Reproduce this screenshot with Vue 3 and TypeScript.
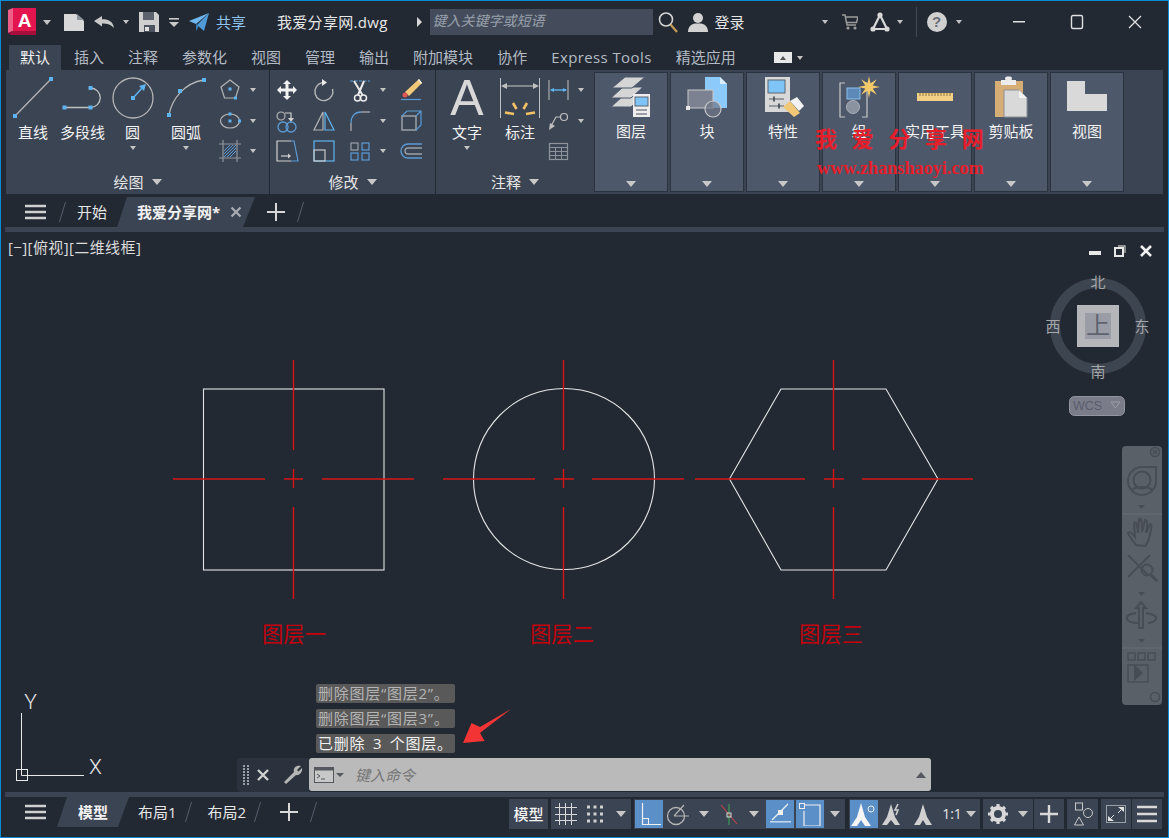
<script setup lang="ts">
const ribbonTabs = ['默认', '插入', '注释', '参数化', '视图', '管理', '输出', '附加模块', '协作', 'Express Tools', '精选应用']

function starPoints(cx: number, cy: number, outer: number, inner: number, n: number) {
  const pts: string[] = []
  for (let i = 0; i < n * 2; i++) {
    const r = i % 2 ? inner : outer
    const a = (Math.PI * i) / n - Math.PI / 2
    pts.push(`${(cx + r * Math.cos(a)).toFixed(1)},${(cy + r * Math.sin(a)).toFixed(1)}`)
  }
  return pts.join(' ')
}

// the three sample shapes share the same centre-mark drawing
const marks = [
  { cx: 293, h: [173, 265, 284, 303, 322, 414] },
  { cx: 563, h: [443, 535, 554, 574, 592, 684] },
  { cx: 833, h: [695, 805, 824, 844, 862, 973] },
]
const layerLabels = [
  { x: 294, text: '图层一' },
  { x: 562, text: '图层二' },
  { x: 831, text: '图层三' },
]
</script>

<template>
  <div class="window">
    <header class="titlebar">
      <svg class="t-logo" width="30" height="28" viewBox="0 0 30 28">
        <polygon points="0,2 5,0 5,23 0,25" fill="#ee5f87" />
        <polygon points="0,25 5,23 28,23 28,27 3,27" fill="#a40f3c" />
        <rect x="5" y="0" width="23" height="23" fill="#e3154f" />
        <text x="16.5" y="19" text-anchor="middle" class="logo-a">A</text>
      </svg>
      <i class="caret t-c1"></i>
      <svg class="t-new" width="20" height="17" viewBox="0 0 20 17">
        <polygon points="0,0 12,0 20,7 20,17 0,17" fill="#d8d8d8" />
        <polygon points="13,0 20,6 13,6" fill="#8f949c" />
      </svg>
      <svg class="t-undo" width="20" height="12" viewBox="0 0 20 12">
        <path d="M0 5L8 0V3.2C14 3 19 5 20 12C17 8.6 13 7.4 8 7.6V10.5Z" fill="#c9c9c9" />
      </svg>
      <i class="caret t-c2"></i>
      <svg class="t-save" width="20" height="20" viewBox="0 0 20 20">
        <path d="M0 0H17L20 3V20H0Z" fill="#cfcfcf" />
        <rect x="4" y="0" width="11" height="8" fill="#5d6470" />
        <rect x="5" y="13" width="11" height="7" fill="#4c535f" />
        <rect x="6" y="15" width="4" height="4" fill="#e0e0e0" />
      </svg>
      <svg class="t-more" width="10" height="9" viewBox="0 0 10 9">
        <rect width="10" height="1.6" fill="#c9c9c9" />
        <polygon points="0,4 10,4 5,9" fill="#c9c9c9" />
      </svg>
      <svg class="t-plane" width="20" height="18" viewBox="0 0 20 18">
        <polygon points="0,8 20,0 7,11" fill="#6fb9f0" />
        <polygon points="20,0 15,18 8,12" fill="#4e9bd8" />
        <polygon points="7,11 10,13 7,18" fill="#3b7fb8" />
      </svg>
      <span class="t-share">共享</span>
      <span class="t-file">我爱分享网.dwg</span>
      <svg class="t-next" width="5" height="10" viewBox="0 0 5 10"><polygon points="0,0 5,5 0,10" fill="#d8d8d8" /></svg>
      <div class="t-search">键入关键字或短语</div>
      <svg class="t-glass" width="20" height="22" viewBox="0 0 20 22">
        <circle cx="8" cy="8.5" r="6.5" fill="none" stroke="#d5d5d5" stroke-width="1.6" />
        <line x1="12.5" y1="13.5" x2="19" y2="21" stroke="#c59a55" stroke-width="2.2" />
      </svg>
      <svg class="t-user" width="20" height="20" viewBox="0 0 20 20">
        <circle cx="10" cy="6" r="5" fill="#d2d2d2" />
        <path d="M0 20C0 14 4 12 7 11.5H13C16 12 20 14 20 20Z" fill="#d2d2d2" />
      </svg>
      <span class="t-login">登录</span>
      <i class="caret t-c3"></i>
      <svg class="t-cart" width="16" height="16" viewBox="0 0 16 16">
        <path d="M0 1H3L5 11H14M4 3H16L14.5 8.5H5" fill="none" stroke="#9b9b9b" stroke-width="1.5" />
        <circle cx="6" cy="14" r="1.6" fill="#9b9b9b" />
        <circle cx="13" cy="14" r="1.6" fill="#9b9b9b" />
      </svg>
      <svg class="t-a360" width="20" height="20" viewBox="0 0 20 20">
        <path d="M10 3L3 17H17Z" fill="none" stroke="#d8d8d8" stroke-width="2.2" />
        <circle cx="10" cy="3" r="2.6" fill="#d8d8d8" />
        <circle cx="3" cy="17" r="2.6" fill="#d8d8d8" />
        <circle cx="17" cy="17" r="2.6" fill="#d8d8d8" />
      </svg>
      <i class="caret t-c4"></i>
      <i class="t-sep"></i>
      <div class="t-help">?</div>
      <i class="caret t-c5"></i>
      <div class="t-winbtns">
        <svg width="58" height="16" viewBox="0 0 58 16"><rect x="23" y="7" width="12" height="1.5" fill="#e0e0e0" /></svg>
        <svg width="58" height="16" viewBox="0 0 58 16"><rect x="23.5" y="1.5" width="11" height="13" rx="1.5" fill="none" stroke="#e0e0e0" stroke-width="1.4" /></svg>
        <svg width="58" height="16" viewBox="0 0 58 16"><path d="M23 2L35 14M35 2L23 14" stroke="#e0e0e0" stroke-width="1.3" /></svg>
      </div>
    </header>

    <nav class="ribbon-tabs">
      <span v-for="(tab, i) in ribbonTabs" :key="tab" class="r-tab" :class="{ active: i === 0, latin: tab === 'Express Tools' }">{{ tab }}</span>
      <span class="r-mini"><i></i></span>
      <i class="caret r-mini-c"></i>
    </nav>

    <section class="ribbon">
      <!-- 绘图 -->
      <div class="group g-draw">
        <div class="tools">
          <div class="big" style="width: 54px">
            <svg width="54" height="46" viewBox="0 0 54 46">
              <line x1="9" y1="41" x2="45" y2="4" stroke="#b5b5b5" stroke-width="1.3" />
              <rect x="7" y="39" width="4" height="4" class="grip" />
              <rect x="43" y="2" width="4" height="4" class="grip" />
            </svg>
            <span class="big-label">直线</span>
          </div>
          <div class="big" style="width: 45px">
            <svg width="45" height="46" viewBox="0 0 45 46">
              <path d="M4.5 32.5H30.5A9.75 9.75 0 0 0 30.5 13" fill="none" stroke="#c0c0c0" stroke-width="1.3" />
              <rect x="2.5" y="30.5" width="4" height="4" class="grip" />
              <rect x="28.5" y="30.5" width="4" height="4" class="grip" />
              <rect x="28.5" y="11" width="4" height="4" class="grip" />
            </svg>
            <span class="big-label">多段线</span>
          </div>
          <div class="big" style="width: 55px">
            <svg width="54" height="46" viewBox="0 0 54 46">
              <circle cx="27" cy="23" r="20" fill="none" stroke="#b5b5b5" stroke-width="1.3" />
              <line x1="27" y1="23" x2="37" y2="12" stroke="#5eb4f0" stroke-width="1.5" />
              <polygon points="40,9 38,16 33,11" fill="#5eb4f0" />
              <rect x="25" y="21" width="4" height="4" class="grip" />
            </svg>
            <span class="big-label">圆</span>
            <i class="caret big-c"></i>
          </div>
          <div class="big" style="width: 52px">
            <svg width="52" height="46" viewBox="0 0 52 46">
              <path d="M9 40C12 24 24 8 44 5" fill="none" stroke="#b5b5b5" stroke-width="1.3" />
              <rect x="7" y="38" width="4" height="4" class="grip" />
              <rect x="18" y="14" width="4" height="4" class="grip" />
              <rect x="42" y="3" width="4" height="4" class="grip" />
            </svg>
            <span class="big-label">圆弧</span>
            <i class="caret big-c"></i>
          </div>
          <div class="small-col">
            <div class="small">
              <svg width="30" height="30" viewBox="0 0 30 30">
                <polygon points="15,5 24,12 20.5,23 9.5,23 6,12" fill="none" stroke="#b5b5b5" stroke-width="1.2" />
                <rect x="13.5" y="12.5" width="3" height="3" class="grip" />
                <rect x="19" y="21.5" width="3" height="3" class="grip" />
              </svg>
              <i class="caret"></i>
            </div>
            <div class="small">
              <svg width="30" height="30" viewBox="0 0 30 30">
                <ellipse cx="15" cy="15" rx="9.5" ry="7" fill="none" stroke="#b5b5b5" stroke-width="1.2" />
                <rect x="13.5" y="13.5" width="3" height="3" class="grip" />
                <rect x="13.5" y="6.5" width="3" height="3" class="grip" />
                <rect x="23" y="13.5" width="3" height="3" class="grip" />
              </svg>
              <i class="caret"></i>
            </div>
            <div class="small">
              <svg width="30" height="30" viewBox="0 0 30 30">
                <path d="M8 4V26M22 4V26M4 8H26M4 22H26" stroke="#8f949c" stroke-width="1.2" />
                <path d="M9 15L15 9M9 21L21 9M15 21L21 15M9 18L18 9M12 21L21 12" stroke="#5b9bd5" stroke-width="1" />
              </svg>
              <i class="caret"></i>
            </div>
          </div>
        </div>
        <div class="group-label">绘图<i class="caret wide"></i></div>
      </div>

      <!-- 修改 -->
      <div class="group g-edit">
        <div class="tools edit-grid">
          <svg width="30" height="30" viewBox="0 0 30 30">
            <path d="M15 5l4 4h-2.5v4.5H21V11l4 4-4 4v-2.5h-4.5V21H19l-4 4-4-4h2.5v-4.5H9V19l-4-4 4-4v2.5h4.5V9H11z" fill="#f2f2f2" />
          </svg>
          <svg width="30" height="30" viewBox="0 0 30 30">
            <path d="M13 7.8A9 9 0 1 0 23.5 14" fill="none" stroke="#b5b5b5" stroke-width="1.4" />
            <polygon points="13,4 18,7.5 13,11" fill="#e8e8e8" />
          </svg>
          <div class="small">
            <svg width="30" height="30" viewBox="0 0 30 30">
              <path d="M5 6H25" stroke="#5b9bd5" stroke-width="1.2" stroke-dasharray="3 1.5" />
              <path d="M9 6L17.5 20M19 6L13 20" stroke="#ececec" stroke-width="2" />
              <circle cx="12.5" cy="23" r="3" fill="none" stroke="#ececec" stroke-width="1.5" />
              <circle cx="18.5" cy="23" r="3" fill="none" stroke="#ececec" stroke-width="1.5" />
            </svg>
            <i class="caret"></i>
          </div>
          <svg width="30" height="30" viewBox="0 0 30 30">
            <polygon points="23,4 26,8 13,21 9,17" fill="#f0c878" />
            <polygon points="23,4 26,8 25,9 22,5" fill="#f5f5f5" />
            <circle cx="9" cy="20" r="2.5" fill="#e05555" />
            <line x1="5" y1="24.5" x2="25" y2="24.5" stroke="#5b9bd5" stroke-width="1.2" />
          </svg>

          <svg width="30" height="30" viewBox="0 0 30 30">
            <circle cx="9" cy="10" r="4" fill="none" stroke="#b5b5b5" stroke-width="1.2" />
            <path d="M13 7H19V14" fill="none" stroke="#d0d0d0" stroke-width="1.2" />
            <polygon points="16,12 22,12 19,16" fill="#d0d0d0" />
            <circle cx="11" cy="21" r="5" fill="none" stroke="#5b9bd5" stroke-width="1.3" />
            <circle cx="19" cy="21" r="5" fill="none" stroke="#5b9bd5" stroke-width="1.3" />
          </svg>
          <svg width="30" height="30" viewBox="0 0 30 30">
            <polygon points="14,6 14,24 5,24" fill="none" stroke="#b5b5b5" stroke-width="1.2" />
            <polygon points="16,6 16,24 25,24" fill="none" stroke="#5eb4f0" stroke-width="1.2" />
          </svg>
          <div class="small">
            <svg width="30" height="30" viewBox="0 0 30 30">
              <path d="M6 25V17" stroke="#b5b5b5" stroke-width="1.2" />
              <path d="M16 6H25" stroke="#b5b5b5" stroke-width="1.2" />
              <path d="M6 17C6 10 10 6 16 6" fill="none" stroke="#5b9bd5" stroke-width="1.3" />
            </svg>
            <i class="caret"></i>
          </div>
          <svg width="30" height="30" viewBox="0 0 30 30">
            <rect x="6" y="10" width="14" height="14" fill="none" stroke="#9aa0a8" stroke-width="1.5" />
            <path d="M6 10L11 5H25V19L20 24M20 10L25 5" fill="none" stroke="#5b9bd5" stroke-width="1.2" />
          </svg>

          <svg width="30" height="30" viewBox="0 0 30 30">
            <path d="M19 5H5V25H19" fill="none" stroke="#d0d0d0" stroke-width="1.2" />
            <path d="M19 5H22L26 25H19" fill="none" stroke="#5b9bd5" stroke-width="1.2" />
            <path d="M9 20H17" stroke="#d0d0d0" stroke-width="1.2" />
            <polygon points="16,17.5 19,20 16,22.5" fill="#d0d0d0" />
          </svg>
          <svg width="30" height="30" viewBox="0 0 30 30">
            <rect x="5" y="5" width="20" height="20" fill="none" stroke="#5eb4f0" stroke-width="1.2" />
            <rect x="5" y="14" width="11" height="11" fill="none" stroke="#c8c8c8" stroke-width="1.2" />
          </svg>
          <div class="small">
            <svg width="30" height="30" viewBox="0 0 30 30">
              <rect x="6" y="7" width="7" height="7" fill="none" stroke="#9aa0a8" stroke-width="1.2" />
              <rect x="17" y="7" width="7" height="7" fill="none" stroke="#5b9bd5" stroke-width="1.2" />
              <rect x="6" y="17" width="7" height="7" fill="none" stroke="#5b9bd5" stroke-width="1.2" />
              <rect x="17" y="17" width="7" height="7" fill="none" stroke="#5b9bd5" stroke-width="1.2" />
            </svg>
            <i class="caret"></i>
          </div>
          <svg width="30" height="30" viewBox="0 0 30 30">
            <path d="M26 8H12A7 7 0 0 0 12 22H26" fill="none" stroke="#5b9bd5" stroke-width="1.3" />
            <path d="M26 12H12A3 3 0 0 0 12 18H26" fill="none" stroke="#9aa0a8" stroke-width="1.3" />
          </svg>
        </div>
        <div class="group-label">修改<i class="caret wide"></i></div>
      </div>

      <!-- 注释 -->
      <div class="group g-note">
        <div class="tools">
          <div class="big" style="width: 62px">
            <span class="big-a">A</span>
            <span class="big-label">文字</span>
            <i class="caret big-c"></i>
          </div>
          <div class="big" style="width: 44px">
            <svg width="44" height="46" viewBox="0 0 44 46">
              <path d="M2.5 3V43M41.5 3V43" stroke="#c0c0c0" stroke-width="1" />
              <path d="M8 11H36" stroke="#b5b5b5" stroke-width="1.2" />
              <polygon points="3,11 9,8 9,14" fill="#c0c0c0" />
              <polygon points="41,11 35,8 35,14" fill="#c0c0c0" />
              <path d="M7 37.5L16 39M15 28L18.5 34M29 28L25.5 34M28 39L37 37.5" stroke="#f2c266" stroke-width="2.6" />
            </svg>
            <span class="big-label">标注</span>
          </div>
          <div class="small-col note-col">
            <div class="small">
              <svg width="30" height="30" viewBox="0 0 30 30">
                <path d="M6 5V25M25 5V25" stroke="#c0c0c0" stroke-width="1" />
                <path d="M8 15H23" stroke="#5eb4f0" stroke-width="1.4" />
                <polygon points="7,15 11,13 11,17" fill="#5eb4f0" />
                <polygon points="24,15 20,13 20,17" fill="#5eb4f0" />
              </svg>
              <i class="caret"></i>
            </div>
            <div class="small">
              <svg width="30" height="30" viewBox="0 0 30 30">
                <circle cx="21" cy="11" r="3.5" fill="none" stroke="#c0c0c0" stroke-width="1.2" />
                <path d="M17.5 11H13L8 20" fill="none" stroke="#c0c0c0" stroke-width="1.2" />
                <polygon points="6,24 7,17 12,20" fill="#c0c0c0" />
              </svg>
              <i class="caret"></i>
            </div>
            <div class="small">
              <svg width="30" height="30" viewBox="0 0 30 30">
                <rect x="6.5" y="7.5" width="18" height="16" fill="none" stroke="#8f949c" stroke-width="1.2" />
                <path d="M6.5 11.5H24.5M6.5 15.5H24.5M6.5 19.5H24.5M12.5 11.5V23.5M18.5 11.5V23.5" stroke="#8f949c" stroke-width="1" />
              </svg>
            </div>
          </div>
        </div>
        <div class="group-label">注释<i class="caret wide"></i></div>
      </div>

      <!-- 折叠面板 -->
      <div class="collapsed">
        <div class="panel">
          <svg width="72" height="46" viewBox="0 0 72 46">
            <g transform="translate(-1 0)">
              <polygon points="28,21 48,21 36,32 16,32" fill="#d5d5d5" stroke="#4d586b" />
              <polygon points="28,12 48,12 36,23 16,23" fill="#d5d5d5" stroke="#4d586b" />
              <polygon points="30,2 50,2 37,13 17,13" fill="#d5d5d5" stroke="#4d586b" />
              <rect x="38" y="19" width="17" height="23" fill="#eeeeee" />
              <rect x="40" y="22" width="13" height="9" fill="#7fc4f7" stroke="#5a6470" />
              <path d="M41 35H52M41 39H52" stroke="#4a4f58" stroke-width="1" />
            </g>
          </svg>
          <span class="panel-label">图层</span>
          <i class="caret wide"></i>
        </div>
        <div class="panel">
          <svg width="72" height="46" viewBox="0 0 72 46">
            <polygon points="33,2 48,2 55,9 55,33 33,33" fill="#8ccafc" />
            <polygon points="48,2 55,9 48,9" fill="#d8ecfb" />
            <rect x="16" y="15" width="25" height="18" fill="#7c8291" stroke="#c8c8c8" />
            <circle cx="41" cy="34" r="8" fill="#6f7686" fill-opacity="0.7" stroke="#c8c8c8" stroke-width="1.2" />
            <rect x="14" y="31" width="4" height="4" fill="#e8e8e8" />
          </svg>
          <span class="panel-label">块</span>
          <i class="caret wide"></i>
        </div>
        <div class="panel">
          <svg width="72" height="46" viewBox="0 0 72 46">
            <rect x="17" y="2" width="25" height="35" fill="#d8d8d8" />
            <rect x="20" y="5" width="17" height="13" fill="#7fc4f7" stroke="#5a6470" />
            <path d="M21 24H36M21 31H36" stroke="#555b65" stroke-width="1.2" />
            <path d="M26 21.5V26.5M31 28.5V33.5" stroke="#555b65" stroke-width="2" />
            <polygon points="35,32 42,26 52,38 46,42" fill="#f0c878" />
            <polygon points="42,26 49,22 56,31 51,36" fill="#f2f2f2" />
          </svg>
          <span class="panel-label">特性</span>
          <i class="caret wide"></i>
        </div>
        <div class="panel">
          <svg width="72" height="46" viewBox="0 0 72 46">
            <path d="M21 8H16V42H21M40 8H43V42H38" fill="none" stroke="#c8c8c8" stroke-width="1.2" />
            <rect x="23" y="13" width="13" height="11" fill="#5d89b8" stroke="#8cc0ee" />
            <circle cx="29" cy="32" r="6.5" fill="#8b93a1" stroke="#aab0ba" />
            <polygon :points="starPoints(45, 12, 11, 4, 8)" fill="#f3c969" />
          </svg>
          <span class="panel-label">组</span>
          <i class="caret wide"></i>
        </div>
        <div class="panel">
          <svg width="72" height="46" viewBox="0 0 72 46">
            <rect x="17" y="18" width="36" height="8" fill="#f2d084" />
            <path d="M20 18v3M23 18v3M26 18v3M29 18v3M32 18v3M35 18v3M38 18v3M41 18v3M44 18v3M47 18v3M50 18v3" stroke="#8a7440" stroke-width="1" />
          </svg>
          <span class="panel-label">实用工具</span>
          <i class="caret wide"></i>
        </div>
        <div class="panel">
          <svg width="72" height="46" viewBox="0 0 72 46">
            <rect x="19" y="6" width="28" height="36" fill="#d6ad74" />
            <rect x="25" y="5" width="15" height="5" fill="#ececec" />
            <rect x="29" y="1.5" width="7" height="4" rx="2" fill="#ececec" />
            <polygon points="28,15 43,15 51,23 51,42 28,42" fill="#d9d9d9" stroke="#8c8f96" />
            <polygon points="43,15 51,23 43,23" fill="#f2f2f2" />
          </svg>
          <span class="panel-label">剪贴板</span>
          <i class="caret wide"></i>
        </div>
        <div class="panel">
          <svg width="72" height="46" viewBox="0 0 72 46">
            <polygon points="15,6 33,6 33,19 55,19 55,36 15,36" fill="#d9d9d9" />
          </svg>
          <span class="panel-label">视图</span>
          <i class="caret wide"></i>
        </div>
      </div>

      <div class="watermark">
        <div class="wm-cn">我爱分享网</div>
        <div class="wm-url">www.zhanshaoyi.com</div>
      </div>
    </section>

    <div class="doc-tabs">
      <svg class="burger d-burger" width="21" height="16" viewBox="0 0 21 16">
        <path d="M0 2H21M0 8H21M0 14H21" stroke="#d0d0d0" stroke-width="2.4" />
      </svg>
      <i class="slash d-s1"></i>
      <span class="d-home">开始</span>
      <div class="d-active">
        <span>我爱分享网*</span>
        <svg width="12" height="12" viewBox="0 0 12 12"><path d="M1.5 1.5L10.5 10.5M10.5 1.5L1.5 10.5" stroke="#a9adb3" stroke-width="2.2" /></svg>
      </div>
      <svg class="d-plus" width="18" height="18" viewBox="0 0 18 18"><path d="M9 0V18M0 9H18" stroke="#d8d8d8" stroke-width="2" /></svg>
      <i class="slash d-s2"></i>
    </div>
    <div class="strip"></div>

    <main class="viewport">
      <svg class="drawing" width="1167" height="560" viewBox="1 232 1167 560">
        <rect x="203.5" y="389" width="180.5" height="181" class="shape" />
        <circle cx="564" cy="479" r="90.5" class="shape" />
        <polygon points="729.5,479 781,389 886,389 938,479 886,570 781,570" class="shape" />
        <g v-for="m in marks" :key="m.cx" class="mark">
          <path :d="`M${m.h[0]} 479H${m.h[1]}M${m.h[2]} 479H${m.h[3]}M${m.h[4]} 479H${m.h[5]}`" />
          <path :d="`M${m.cx}.5 360V450M${m.cx}.5 469V488M${m.cx}.5 507V599`" />
        </g>
        <text v-for="l in layerLabels" :key="l.x" :x="l.x" y="642" text-anchor="middle" class="layer-label">{{ l.text }}</text>

        <!-- UCS icon -->
        <path d="M21.5 713V775.5H84" fill="none" stroke="#e8e8e8" stroke-width="1" />
        <rect x="16.5" y="769.5" width="11" height="11" fill="none" stroke="#e8e8e8" stroke-width="1" />
        <text x="95.5" y="774" text-anchor="middle" class="ucs">X</text>
        <text x="30.5" y="709" text-anchor="middle" class="ucs">Y</text>

        <!-- red callout arrow -->
        <polygon points="511,709 480,733 484.6,741 463,743 471.5,723 480,727" fill="#f23434" />
      </svg>

      <div class="vp-label">[−][俯视][二维线框]</div>

      <svg class="vp-ctrl" width="66" height="14" viewBox="0 0 66 14">
        <rect x="1" y="7" width="12" height="4" fill="#e8e8e8" />
        <rect x="27" y="4" width="8" height="8" fill="none" stroke="#e8e8e8" stroke-width="2" />
        <path d="M30 2H37V9" fill="none" stroke="#b8b8b8" stroke-width="1.3" />
        <path d="M53 2L63 12M63 2L53 12" stroke="#f0f0f0" stroke-width="2.6" />
      </svg>

      <svg class="viewcube" width="110" height="160" viewBox="1043 265 110 160">
        <circle cx="1098" cy="326" r="43" fill="none" stroke="#3d4550" stroke-width="10" />
        <rect x="1077" y="305" width="42" height="42" fill="#b4b6ba" />
        <rect x="1085" y="313" width="26" height="26" fill="#9b9da6" />
        <text x="1098" y="334" text-anchor="middle" class="vc-top">上</text>
        <text x="1098" y="288" text-anchor="middle" class="vc-dir">北</text>
        <text x="1098" y="377" text-anchor="middle" class="vc-dir">南</text>
        <text x="1053" y="332" text-anchor="middle" class="vc-dir">西</text>
        <text x="1142" y="332" text-anchor="middle" class="vc-dir">东</text>
        <rect x="1069.5" y="396.5" width="55" height="19" rx="5" fill="#7a7c8a" stroke="#93959f" />
        <text x="1073" y="410" class="vc-wcs">WCS</text>
        <polygon points="1111,402 1120,402 1115.5,408" fill="none" stroke="#9a9ca6" />
      </svg>

      <svg class="navbar" width="40" height="259" viewBox="1122 446 40 259">
        <g fill="none" stroke="#474c55" stroke-width="1.6">
          <circle cx="1155" cy="452" r="4.5" />
          <path d="M1153 450l4 4M1157 450l-4 4" />
          <path d="M1142 467a14 14 0 1 0 14 14v-14z" stroke-width="2" />
          <circle cx="1142" cy="480" r="8.5" stroke-width="2" />
          <path d="M1132 490c4-4 16-4 20 0" stroke-width="2" />
          <path d="M1136 545c-3-4-7-9-8-12 2-2 4 0 7 4l-1-14c2-2 3 0 4 10l1-14c2-1 3 0 3 13l3-12c2 0 3 1 1 13l4-9c2 0 2 2 0 10-1 5-2 9-5 12z" stroke-width="2" />
          <path d="M1128 555l20 20M1150 555l-22 22" stroke-width="1.8" />
          <circle cx="1147" cy="570" r="5.5" stroke-width="2" />
          <path d="M1151 575l6 6" stroke-width="3" />
          <path d="M1139 628v-20h-3l5-6 5 6h-3v20z" stroke-width="2" />
          <path d="M1136 613c-8 1-10 4-9 6 1 3 6 4 12 4M1146 613c8 1 11 4 10 6-1 3-6 4-8 4" stroke-width="2" />
          <rect x="1128" y="653" width="7" height="7" stroke-width="1.4" />
          <rect x="1138" y="653" width="7" height="7" stroke-width="1.4" />
          <rect x="1148" y="653" width="7" height="7" stroke-width="1.4" />
          <rect x="1128" y="665" width="20" height="17" stroke-width="1.4" />
          <circle cx="1155" cy="697" r="4.5" />
        </g>
        <polygon points="1134,664 1134,681 1143,673" fill="#474c55" />
        <path d="M1122 514H1162M1122 648H1162" stroke="#666c75" stroke-width="1" />
        <polygon points="1138,505 1145,505 1141.5,509" fill="#474c55" />
        <polygon points="1138,592 1145,592 1141.5,596" fill="#474c55" />
        <polygon points="1138,639 1145,639 1141.5,643" fill="#474c55" />
      </svg>

      <div class="cmd">
        <div class="cmd-history">
          <span class="hist">删除图层“图层2”。</span>
          <span class="hist">删除图层“图层3”。</span>
          <span class="hist last">已删除 3 个图层。</span>
        </div>
        <div class="cmd-bar">
          <div class="cmd-tools">
            <svg width="6" height="22" viewBox="0 0 6 22">
              <path d="M1 1V21M5 1V21" stroke="#9aa0a8" stroke-width="2" stroke-dasharray="2 1" />
            </svg>
            <svg class="cmd-x" width="12" height="12" viewBox="0 0 12 12"><path d="M1 1L11 11M11 1L1 11" stroke="#d0d0d0" stroke-width="2.4" /></svg>
            <svg class="cmd-wrench" width="20" height="20" viewBox="0 0 20 20">
              <path d="M1 17L11 7C10 3 13 0 18 1L14 5L15.5 6.5L19 3C20 7 16 11 13 10L3 19Z" fill="#b5b5b5" />
            </svg>
          </div>
          <div class="cmd-input">
            <svg width="20" height="16" viewBox="0 0 20 16">
              <rect x="0.5" y="0.5" width="19" height="15" fill="#c8c8c8" stroke="#55595f" />
              <rect x="0.5" y="0.5" width="19" height="3" fill="#55595f" />
              <path d="M3 7L6 9L3 11M7 12H11" fill="none" stroke="#55595f" stroke-width="1" />
            </svg>
            <i class="caret cmd-c"></i>
            <span class="cmd-hint">键入命令</span>
            <svg class="cmd-up" width="10" height="6" viewBox="0 0 10 6"><polygon points="5,0 10,6 0,6" fill="#55595f" /></svg>
          </div>
        </div>
      </div>
    </main>

    <div class="strip"></div>

    <footer class="status">
      <svg class="burger s-burger" width="21" height="16" viewBox="0 0 21 16">
        <path d="M0 2H21M0 8H21M0 14H21" stroke="#d0d0d0" stroke-width="2.4" />
      </svg>
      <div class="s-active">模型</div>
      <span class="s-tab s-t1">布局1</span>
      <i class="slash s-s1"></i>
      <span class="s-tab s-t2">布局2</span>
      <i class="slash s-s2"></i>
      <svg class="s-plus" width="18" height="18" viewBox="0 0 18 18"><path d="M9 0V18M0 9H18" stroke="#d8d8d8" stroke-width="2" /></svg>
      <i class="slash s-s3"></i>

      <div class="s-right">
        <div class="s-group s-model">模型</div>
        <div class="s-group" style="margin-left: 3px; width: 80px">
          <div class="s-btn" style="width: 29px">
            <svg width="22" height="24" viewBox="0 0 22 24">
              <path d="M4.5 1V23M10.5 1V23M16.5 1V23M0 5.5H22M0 12.5H22M0 18.5H22" stroke="#d8d8d8" stroke-width="1" />
            </svg>
          </div>
          <div class="s-btn" style="width: 30px">
            <svg width="16" height="20" viewBox="0 0 16 20">
              <path d="M0 3H16M0 10H16M0 17H16" stroke="#d0d0d0" stroke-width="3" stroke-dasharray="3 3.5" />
            </svg>
          </div>
          <div class="s-btn" style="width: 21px"><i class="caret wide"></i></div>
        </div>
        <div class="s-group" style="margin-left: 3px; width: 131px; padding-left: 1px">
          <div class="s-btn on" style="width: 28px">
            <svg width="24" height="24" viewBox="0 0 24 24">
              <path d="M5.5 1V22.5H24" fill="none" stroke="#f0f0f0" stroke-width="1.2" />
              <rect x="5.5" y="16.5" width="6" height="6" fill="none" stroke="#f0f0f0" />
            </svg>
          </div>
          <div class="s-btn" style="width: 30px">
            <svg width="24" height="24" viewBox="0 0 24 24">
              <circle cx="10" cy="14" r="8.5" fill="none" stroke="#b5b5b5" stroke-width="1.3" />
              <path d="M8 14H23M8 14L18 3" stroke="#b5b5b5" stroke-width="1.2" />
            </svg>
          </div>
          <div class="s-btn" style="width: 22px"><i class="caret wide"></i></div>
          <div class="s-btn" style="width: 28px">
            <svg width="22" height="24" viewBox="0 0 22 24">
              <line x1="11" y1="2" x2="11" y2="23" stroke="#3faa58" stroke-width="1" />
              <line x1="3" y1="3" x2="19" y2="22" stroke="#c0464a" stroke-width="1.1" />
              <rect x="9" y="11" width="4" height="4" fill="none" stroke="#d8d8d8" />
            </svg>
          </div>
          <div class="s-btn" style="width: 22px"><i class="caret wide"></i></div>
        </div>
        <div class="s-group" style="width: 80px; padding-left: 1px">
          <div class="s-btn on" style="width: 28px">
            <svg width="24" height="24" viewBox="0 0 24 24">
              <path d="M4 18L20 2" stroke="#f0f0f0" stroke-width="1.2" />
              <rect x="10" y="8" width="5" height="5" fill="#f0f0f0" />
              <rect x="2" y="19" width="21" height="1.6" fill="#c0d4ea" />
            </svg>
          </div>
          <div class="s-btn on" style="width: 28px; margin-left: 2px">
            <svg width="24" height="24" viewBox="0 0 24 24">
              <path d="M6 3H22V24H6V9" fill="none" stroke="#f0f0f0" stroke-width="1.2" />
              <rect x="1.5" y="1.5" width="5" height="5" fill="#5a8fc8" stroke="#f0f0f0" />
            </svg>
          </div>
          <div class="s-btn" style="width: 21px"><i class="caret wide"></i></div>
        </div>
        <div class="s-group" style="margin-left: 4px; width: 131px; padding-left: 1px">
          <div class="s-btn on" style="width: 28px">
            <svg width="26" height="24" viewBox="0 0 26 24">
              <path d="M10 1L14 15L20 24H14L10 18L6 24H0L6 15Z" fill="#f5f5f5" />
              <circle cx="20" cy="7" r="3" fill="none" stroke="#f0f0f0" />
            </svg>
          </div>
          <div class="s-btn" style="width: 30px">
            <svg width="24" height="24" viewBox="0 0 24 24">
              <path d="M10 2L14 15L19 23H14L10 18L6 23H1L6 15Z" fill="#d0d0d0" />
              <path d="M17 2L14 8H17L15 13" fill="none" stroke="#d0d0d0" stroke-width="1.6" />
            </svg>
          </div>
          <div class="s-btn" style="width: 30px">
            <svg width="22" height="24" viewBox="0 0 22 24">
              <path d="M11 2L15 15L20 23H14L11 18L8 23H2L7 15Z" fill="#d0d0d0" />
            </svg>
          </div>
          <div class="s-btn s-scale" style="width: 42px">1:1<i class="caret wide"></i></div>
        </div>
        <div class="s-group" style="margin-left: 3px; width: 50px">
          <div class="s-btn" style="width: 29px">
            <svg width="20" height="20" viewBox="0 0 20 20">
              <circle cx="10" cy="10" r="6" fill="none" stroke="#d8d8d8" stroke-width="4" />
              <path d="M10 0V4M10 16V20M0 10H4M16 10H20M3 3L6 6M14 14L17 17M17 3L14 6M6 14L3 17" stroke="#d8d8d8" stroke-width="3.2" />
            </svg>
          </div>
          <div class="s-btn" style="width: 21px"><i class="caret wide"></i></div>
        </div>
        <div class="s-group" style="margin-left: 1px; width: 30px">
          <svg width="18" height="18" viewBox="0 0 18 18"><path d="M9 0V18M0 9H18" stroke="#d8d8d8" stroke-width="2.4" /></svg>
        </div>
        <div class="s-group" style="margin-left: 3px; width: 31px">
          <svg width="20" height="24" viewBox="0 0 20 24">
            <rect x="2.5" y="1" width="7" height="7" fill="none" stroke="#c8c8c8" />
            <circle cx="15" cy="11" r="4.5" fill="none" stroke="#c8c8c8" />
            <polygon points="6,15 10.5,23 1.5,23" fill="none" stroke="#c8c8c8" />
          </svg>
        </div>
        <div class="s-group" style="margin-left: 3px; width: 30px">
          <svg width="20" height="20" viewBox="0 0 20 20">
            <rect x="0.5" y="1.5" width="19" height="17" fill="none" stroke="#9aa0a8" />
            <polygon points="18,3 12,3 18,8" fill="#e0e0e0" />
            <polygon points="2,17 8,17 2,12" fill="#e0e0e0" />
            <path d="M15 6L12 9M5 14L8 11" stroke="#e0e0e0" />
          </svg>
        </div>
        <div class="s-group" style="margin-left: 1px; width: 30px">
          <svg width="20" height="20" viewBox="0 0 20 20">
            <path d="M0 3H20M0 10H20M0 17H20" stroke="#d8d8d8" stroke-width="2.4" />
          </svg>
        </div>
      </div>
    </footer>
  </div>
</template>

<style>
html,
body {
  margin: 0;
  background: #222933;
}
</style>

<style scoped>
.window {
  position: relative;
  box-sizing: border-box;
  width: 1169px;
  height: 838px;
  display: flex;
  flex-direction: column;
  overflow: hidden;
  background: #222933;
  border: 1px solid #0b8ad8;
  color: #e6e6e6;
  font: 15px/20px "Open Sans", "Noto Sans CJK SC", sans-serif;
}
svg {
  display: block;
  flex: none;
}
i {
  display: block;
  flex: none;
}
.caret {
  width: 0;
  height: 0;
  border-left: 3.5px solid transparent;
  border-right: 3.5px solid transparent;
  border-top: 4px solid #c4c4c4;
}
.caret.wide {
  border-left-width: 5px;
  border-right-width: 5px;
  border-top-width: 6px;
  border-top-color: #c8c8c8;
}
.grip {
  fill: #5eb4f0;
}
.slash {
  width: 1px;
  height: 20px;
  background: #565f6d;
  transform: skewX(-17deg);
}

/* title bar */
.titlebar {
  height: 44px;
  padding-bottom: 2px;
  box-sizing: border-box;
  display: flex;
  align-items: center;
}
.t-logo { margin-left: 7px; }
.logo-a {
  font: bold 19px "Liberation Sans", sans-serif;
  fill: #fff;
}
.t-c1 { margin-left: 5px; border-left-width: 4.5px; border-right-width: 4.5px; border-top-width: 5px; }
.t-new { margin-left: 13px; }
.t-undo { margin-left: 10px; }
.t-c2 { margin-left: 9px; }
.t-save { margin-left: 10px; }
.t-more { margin-left: 10px; }
.t-plane { margin-left: 10px; }
.t-share { margin-left: 7px; color: #8fc4ee; }
.t-file { margin-left: 31px; color: #e8e8e8; letter-spacing: 0.3px; }
.t-next { margin-left: 29px; }
.t-search {
  margin-left: 8px;
  width: 223px;
  height: 26px;
  padding-left: 3px;
  box-sizing: border-box;
  background: #444c5c;
  color: #98a0ab;
  font-size: 14px;
  font-style: italic;
  line-height: 24px;
}
.t-glass { margin-left: 5px; }
.t-user { margin-left: 10px; }
.t-login { margin-left: 7px; }
.t-c3 { margin-left: 77px; }
.t-cart { margin-left: 14px; }
.t-a360 { margin-left: 12px; }
.t-c4 { margin-left: 7px; }
.t-sep { margin-left: 13px; width: 1px; height: 30px; background: #434b58; }
.t-help {
  margin-left: 10px;
  width: 20px;
  height: 20px;
  border-radius: 50%;
  background: #d0d0d0;
  color: #6a6e75;
  font: bold 15px/20px "Liberation Sans", sans-serif;
  text-align: center;
}
.t-c5 { margin-left: 9px; }
.t-winbtns {
  margin-left: auto;
  margin-right: 4px;
  display: flex;
}

/* ribbon tabs */
.ribbon-tabs {
  height: 25px;
  padding-left: 8px;
  display: flex;
  gap: 2px;
  align-items: stretch;
}
.r-tab {
  padding: 0 11px;
  line-height: 25px;
  color: #b4bbc4;
  white-space: nowrap;
}
.r-tab.active {
  background: #3b4453;
  color: #f2f2f2;
}
.r-tab.latin { letter-spacing: 0.4px; }
.r-mini {
  margin-left: 25px;
  align-self: center;
  width: 18px;
  height: 11px;
  background: #e8e8e8;
  display: flex;
  align-items: center;
  justify-content: center;
}
.r-mini i {
  width: 0;
  height: 0;
  border-left: 3px solid transparent;
  border-right: 3px solid transparent;
  border-bottom: 4px solid #555;
}
.r-mini-c { align-self: center; margin-left: 3px; }

/* ribbon */
.ribbon {
  position: relative;
  height: 124px;
  margin: 0 5px;
  display: flex;
  background: #3b4453;
}
.group {
  box-sizing: border-box;
  display: flex;
  flex-direction: column;
  padding-top: 5px;
  border-right: 1px solid #222933;
}
.g-draw { width: 264px; }
.g-edit { width: 166px; }
.g-note { width: 158px; border-right: 0; }
.tools {
  height: 97px;
  display: flex;
}
.group-label {
  height: 19px;
  display: flex;
  align-items: center;
  justify-content: center;
  gap: 8px;
  color: #e6e6e6;
}
.big {
  display: flex;
  flex-direction: column;
  align-items: center;
}
.big-label {
  margin-top: 1px;
  color: #f2f2f2;
  white-space: nowrap;
}
.big-c { margin-top: 4px; }
.big-a {
  height: 46px;
  font: 50px/46px "Liberation Sans", sans-serif;
  color: #d8d8d8;
}
.small-col {
  margin-left: 3px;
  display: flex;
  flex-direction: column;
}
.note-col { margin-left: 1px; }
.small {
  height: 30.5px;
  display: flex;
  align-items: center;
}
.small .caret { margin-left: 5px; }
.edit-grid {
  padding-left: 2px;
  display: grid;
  grid-template-columns: 37px 36px 51px 30px;
  grid-auto-rows: 30.5px;
  align-items: center;
}
.collapsed {
  display: flex;
  gap: 2px;
  padding: 2px 0;
}
.panel {
  box-sizing: border-box;
  width: 74px;
  padding: 2px 0 4px;
  display: flex;
  flex-direction: column;
  align-items: center;
  background: #4d586b;
  border: 1px solid #2b3240;
}
.panel svg { transform: translateX(1px); }
.panel-label {
  color: #f2f2f2;
  white-space: nowrap;
}
.panel .caret { margin-top: auto; }
.watermark {
  position: absolute;
  left: 809px;
  top: 53px;
  color: #e61e2b;
  pointer-events: none;
}
.wm-cn {
  font: bold 22px/28px "Noto Sans CJK SC", sans-serif;
  letter-spacing: 14.7px;
  white-space: nowrap;
}
.wm-url {
  margin: 7px 0 0 2px;
  font: bold 18.2px/20px "Liberation Serif", serif;
  white-space: nowrap;
}

/* document tabs */
.doc-tabs {
  height: 33px;
  padding-top: 3px;
  box-sizing: border-box;
  display: flex;
  align-items: center;
}
.d-burger { margin-left: 24px; }
.d-s1 { margin-left: 16px; }
.d-home { margin-left: 14px; }
.d-active {
  margin-left: 10px;
  width: 138px;
  height: 30px;
  padding-left: 20px;
  box-sizing: border-box;
  display: flex;
  align-items: center;
  gap: 10px;
  background: #3b4453;
  clip-path: polygon(10px 0, 100% 0, 126px 100%, 0 100%);
  font-weight: 700;
  color: #f0f0f0;
}
.d-plus { margin-left: 12px; }
.d-s2 { margin-left: 15px; }
.strip {
  height: 5px;
  margin: 0 4px;
  background: #3b4453;
  flex: none;
}

/* viewport */
.viewport {
  position: relative;
  height: 560px;
  flex: none;
}
.drawing {
  position: absolute;
  left: 0;
  top: 0;
}
.shape {
  fill: none;
  stroke: #e4e4e4;
  stroke-width: 1.1;
}
.mark path {
  fill: none;
  stroke: #d81414;
  stroke-width: 1.4;
}
.layer-label {
  font: 21.3px "Noto Sans CJK SC", sans-serif;
  fill: #c4000c;
}
.ucs {
  font: 300 21px Roboto, sans-serif;
  fill: #e8e8e8;
}
.vp-label {
  position: absolute;
  left: 7px;
  top: 5px;
  font-size: 15px;
  letter-spacing: 0.4px;
  color: #dcdcdc;
}
.vp-ctrl {
  position: absolute;
  left: 1087px;
  top: 12px;
}
.viewcube {
  position: absolute;
  left: 1042px;
  top: 33px;
}
.vc-top {
  font: 24px "Noto Sans CJK SC", sans-serif;
  fill: #5f636f;
}
.vc-dir {
  font: 15px "Noto Sans CJK SC", sans-serif;
  fill: #a4a6a8;
}
.vc-wcs {
  font: 12.5px "Liberation Sans", sans-serif;
  fill: #5b5d6b;
}
.navbar {
  position: absolute;
  left: 1121px;
  top: 214px;
  background: #5a6068;
  border-radius: 4px;
}
.cmd {
  position: absolute;
  left: 236px;
  bottom: 0;
  display: flex;
  flex-direction: column;
  align-items: flex-start;
}
.cmd-history {
  margin-left: 79px;
  display: flex;
  flex-direction: column;
  align-items: stretch;
  gap: 6px;
}
.hist {
  height: 19px;
  padding: 0 2px;
  box-sizing: border-box;
  border-radius: 2px;
  background: #595959;
  color: #b4b4b4;
  font-size: 15px;
  letter-spacing: 0.75px;
  line-height: 19px;
  white-space: pre;
  text-align: left;
}
.hist.last {
  color: #f2f2f2;
  word-spacing: 3px;
}
.cmd-bar {
  margin-top: 5px;
  height: 34px;
  display: flex;
}
.cmd-tools {
  width: 72px;
  box-sizing: border-box;
  padding-left: 6px;
  display: flex;
  align-items: center;
  background: #2b323d;
  border-radius: 3px 0 0 3px;
}
.cmd-x { margin-left: 8px; }
.cmd-wrench { margin-left: 14px; }
.cmd-input {
  width: 622px;
  height: 33px;
  box-sizing: border-box;
  padding: 0 5px;
  display: flex;
  align-items: center;
  background: #bababa;
  border-radius: 3px;
}
.cmd-c { margin-left: 2px; border-top-color: #55595f; border-left-width: 4px; border-right-width: 4px; }
.cmd-hint {
  margin-left: 11px;
  color: #757575;
  font-style: italic;
}
.cmd-up { margin-left: auto; }

/* status bar */
.status {
  flex: 1;
  display: flex;
  align-items: flex-start;
}
.s-burger { margin: 7px 0 0 24px; }
.s-active {
  margin-left: 11px;
  width: 72px;
  height: 30px;
  display: flex;
  align-items: center;
  justify-content: center;
  background: #3b4453;
  clip-path: polygon(10px 0, 100% 0, 61px 100%, 0 100%);
  font-weight: 700;
  color: #f2f2f2;
}
.s-tab { margin-top: 5px; color: #e6e6e6; }
.s-t1 { margin-left: 9px; }
.s-s1 { margin: 5px 0 0 11px; }
.s-t2 { margin-left: 19px; margin-top: 5px; }
.s-s2 { margin: 5px 0 0 11px; }
.s-plus { margin: 6px 0 0 22px; }
.s-s3 { margin: 5px 0 0 15px; }
.s-right {
  margin: 2px 6px 0 auto;
  display: flex;
}
.s-group {
  height: 30px;
  box-sizing: border-box;
  display: flex;
  align-items: center;
  justify-content: center;
  background: #3b4453;
}
.s-group:has(.s-btn) { justify-content: flex-start; }
.s-model {
  width: 39px;
  font-weight: 500;
  color: #f2f2f2;
  font-size: 15px;
}
.s-btn {
  height: 28px;
  display: flex;
  align-items: center;
  justify-content: center;
  flex: none;
}
.s-btn.on { background: #5a8fc8; }
.s-scale {
  gap: 4px;
  color: #e6e6e6;
  font-size: 14px;
}
</style>
